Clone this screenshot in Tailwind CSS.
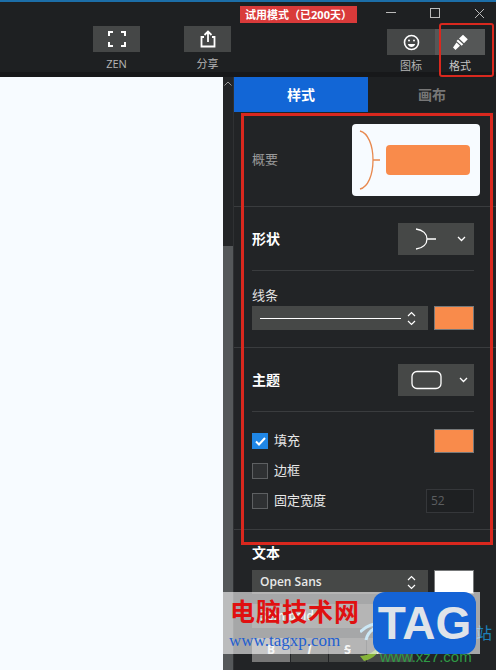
<!DOCTYPE html>
<html lang="zh">
<head>
<meta charset="UTF-8" />
<title>格式</title>
<script src="https://cdn.jsdelivr.net/npm/@tailwindcss/browser@4"></script>
</head>
<body class="w-[496px] h-[670px] overflow-hidden relative bg-[#222426] text-[#e8e8e8] text-[12px] font-['Open_Sans','Noto_Sans_CJK_SC',sans-serif]">

<!-- 顶部工具栏 -->
<header class="h-[77px] bg-[#1e2022] border-t-2 border-t-[#1c6ea8] border-b-[5px] border-b-[#17181a] relative">
  <div class="absolute left-[240px] top-[4px] w-[117px] h-[17px] bg-[#d93a3a] text-white text-[11px] font-bold leading-[17px] text-center">试用模式（已200天）</div>
  <div class="absolute right-0 top-[1px] flex items-center h-[20px]">
    <svg class="w-[58px] h-[20px]" viewBox="0 0 58 20"><path d="M18 9.500h10" stroke="#bbb" fill="none"/></svg>
    <svg class="w-[24px] h-[20px]" viewBox="0 0 24 20"><rect x="4.500" y="5.500" width="9" height="9" stroke="#bbb" fill="none"/></svg>
    <svg class="w-[46px] h-[20px]" viewBox="0 0 46 20"><path d="M25 6l9 9M34 6l-9 9" stroke="#bbb" fill="none"/></svg>
  </div>
  <div class="absolute left-[93px] top-[24px] flex gap-[44px]">
    <div class="w-[47px] flex flex-col items-center">
      <div class="w-[47px] h-[26px] bg-[#454747] flex items-center justify-center">
        <svg class="w-[18px] h-[16px]" viewBox="0 0 18 16" fill="none" stroke="#fff" stroke-width="2"><path d="M1 5V1h4M13 1h4v4M17 11v4h-4M5 15H1v-4"/></svg>
      </div>
      <span class="mt-[5px] text-[11px] leading-[14px] text-[#b4b4b4]">ZEN</span>
    </div>
    <div class="w-[47px] flex flex-col items-center">
      <div class="w-[47px] h-[26px] bg-[#454747] flex items-center justify-center">
        <svg class="w-[18px] h-[18px]" viewBox="0 0 18 18" fill="none" stroke="#fff" stroke-width="1.800"><path d="M5 7H2.500v9.500h13V7H13M9 12V1.500M5.500 5L9 1.500 12.500 5"/></svg>
      </div>
      <span class="mt-[5px] text-[11px] leading-[14px] text-[#b4b4b4]">分享</span>
    </div>
  </div>
  <div class="absolute left-[387px] top-[27px] flex">
    <div class="w-[48px] flex flex-col items-center">
      <div class="w-[48px] h-[26px] bg-[#454747] flex items-center justify-center">
        <svg class="w-[17px] h-[17px]" viewBox="0 0 17 17" fill="none" stroke="#fff" stroke-width="1.600"><circle cx="8.500" cy="8.500" r="7"/><circle cx="6" cy="6.500" r="1" fill="#fff" stroke="none"/><circle cx="11" cy="6.500" r="1" fill="#fff" stroke="none"/><path d="M4.800 10h7.400c-.6 2-2 3-3.700 3s-3.100-1-3.700-3z" fill="#fff" stroke="none"/></svg>
      </div>
      <span class="mt-[4px] text-[11px] leading-[14px] text-[#b4b4b4]">图标</span>
    </div>
    <div class="w-[50px] flex flex-col items-center">
      <div class="w-[50px] h-[26px] bg-[#555757] flex items-center justify-center">
        <svg class="w-[17px] h-[17px]" viewBox="0 0 17 17" fill="#fff"><path d="M7 4.500L11 .800l4.800 4.400-3.800 4zM6 5.500l5.200 4.700-1.500 1.500-5.200-4.700zM4.500 8.500l3.500 3.300L3.500 16 1 13.500z"/></svg>
      </div>
      <span class="mt-[4px] text-[11px] leading-[14px] text-[#c4c4c4]">格式</span>
    </div>
  </div>
</header>

<div class="flex h-[593px]">
  <!-- 画布 -->
  <div class="w-[223px] bg-[#f7fbff]"></div>
  <!-- 滚动条 -->
  <div class="w-[11px] bg-[#232527] border-r border-[#2f3133] flex flex-col">
    <div class="h-[169px] flex justify-center pt-[4px]">
      <svg class="w-[8px] h-[5px]" viewBox="0 0 8 5" fill="none" stroke="#999"><path d="M.5 4.500L4 1l3.500 3.500"/></svg>
    </div>
    <div class="flex-1 bg-[#55585a]"></div>
  </div>
  <!-- 右侧面板 -->
  <aside class="w-[262px] bg-[#222426]">
    <div class="flex h-[35px] text-[14px] font-bold leading-[35px] text-center">
      <div class="w-[134px] bg-[#1266d6] text-white">样式</div>
      <div class="flex-1 bg-[#1e2022] text-[#777]">画布</div>
    </div>

    <section class="h-[95px] border-b border-[#3a3c3e] pl-[18px] pr-[16px] flex items-center justify-between pt-[12px] pb-[10px]">
      <span class="text-[#9a9a9a] text-[13px]">概要</span>
      <div class="w-[128px] h-[72px] bg-[#f7fbff] rounded-[4px] flex items-center gap-[6px] pl-[7px]">
        <svg class="w-[21px] h-[60px]" viewBox="0 0 21 60" fill="none" stroke="#e8894f" stroke-width="1.300"><path d="M1 1c8 2 13 14 13 29S9 57 1 59M14 30h7"/></svg>
        <div class="w-[84px] h-[30px] bg-[#f98b4b] rounded-[4px]"></div>
      </div>
    </section>

    <div class="px-[18px] pr-[22px]">
      <div class="h-[64px] border-b border-[#3a3c3e] flex items-center justify-between">
        <span class="font-bold text-white text-[14px]">形状</span>
        <div class="w-[76px] h-[32px] bg-[#464847] flex items-center pl-[17px] gap-[20px]">
          <svg class="w-[22px] h-[22px]" viewBox="0 0 22 22" fill="none" stroke="#fff" stroke-width="1.300"><path d="M1 1c7 1 11 5 11 10s-4 9-11 10M12 11h9"/></svg>
          <svg class="w-[9px] h-[6px]" viewBox="0 0 9 6" fill="none" stroke="#fff" stroke-width="1.300"><path d="M1 1l3.500 3.500L8 1"/></svg>
        </div>
      </div>
      <div class="h-[76px] pt-[15px]">
        <div class="text-[13px] leading-[18px] text-[#e2e2e2]">线条</div>
        <div class="flex justify-between mt-[2px]">
          <div class="w-[176px] h-[24px] bg-[#464847] flex items-center justify-between pl-[8px] pr-[12px]">
            <div class="w-[141px] h-px bg-white"></div>
            <svg class="w-[9px] h-[15px]" viewBox="0 0 9 15" fill="none" stroke="#fff" stroke-width="1.200"><path d="M1 5l3.500-3.500L8 5M1 10l3.500 3.500L8 10"/></svg>
          </div>
          <div class="w-[40px] h-[24px] bg-[#f98b4b] border border-[#77797a]"></div>
        </div>
      </div>
    </div>

    <div class="border-t border-[#3a3c3e] px-[18px] pr-[22px]">
      <div class="h-[64px] border-b border-[#3a3c3e] flex items-center justify-between">
        <span class="font-bold text-white text-[14px]">主题</span>
        <div class="w-[76px] h-[32px] bg-[#464847] flex items-center pl-[13px] gap-[17px]">
          <svg class="w-[31px] h-[20px]" viewBox="0 0 31 20" fill="none" stroke="#fff" stroke-width="1.300"><rect x="1" y="1.500" width="29" height="17" rx="5"/></svg>
          <svg class="w-[9px] h-[6px]" viewBox="0 0 9 6" fill="none" stroke="#fff" stroke-width="1.300"><path d="M1 1l3.500 3.500L8 1"/></svg>
        </div>
      </div>
      <div class="h-[117px] pt-[17px] flex flex-col">
        <div class="h-[24px] flex items-center">
          <div class="w-[16px] h-[16px] bg-[#1f86e5] flex items-center justify-center">
            <svg class="w-[11px] h-[9px]" viewBox="0 0 11 9" fill="none" stroke="#fff" stroke-width="2"><path d="M1 4.500L4 7.500 10 1"/></svg>
          </div>
          <span class="ml-[6px] text-[13px] text-[#e8e8e8]">填充</span>
          <div class="ml-auto w-[40px] h-[24px] bg-[#f98b4b] border border-[#77797a]"></div>
        </div>
        <div class="h-[24px] mt-[6px] flex items-center">
          <div class="w-[16px] h-[16px] bg-[#2f3133] border border-[#5e6062]"></div>
          <span class="ml-[6px] text-[13px] text-[#e8e8e8]">边框</span>
        </div>
        <div class="h-[24px] mt-[6px] flex items-center">
          <div class="w-[16px] h-[16px] bg-[#2f3133] border border-[#5e6062]"></div>
          <span class="ml-[6px] text-[13px] text-[#e8e8e8]">固定宽度</span>
          <div class="ml-auto w-[48px] h-[24px] bg-[#1e2022] border border-[#35373a] text-[#5c5e60] text-[12px] leading-[22px] pl-[4px]">52</div>
        </div>
      </div>
    </div>

    <div class="border-t border-[#3a3c3e] px-[18px] pr-[22px] pt-[14px]">
      <div class="font-bold text-white text-[14px] leading-[18px]">文本</div>
      <div class="flex justify-between mt-[8px]">
        <div class="w-[176px] h-[24px] bg-[#464847] flex items-center justify-between pl-[8px] pr-[12px]">
          <span class="text-[12px] font-semibold text-[#e8e8e8]">Open Sans</span>
          <svg class="w-[9px] h-[15px]" viewBox="0 0 9 15" fill="none" stroke="#fff" stroke-width="1.200"><path d="M1 5l3.500-3.500L8 5M1 10l3.500 3.500L8 10"/></svg>
        </div>
        <div class="w-[40px] h-[24px] bg-white border border-[#77797a]"></div>
      </div>
      <div class="flex justify-between mt-[10px]">
        <div class="w-[166px] h-[24px] bg-[#464847] flex items-center justify-between pl-[8px] pr-[11px]">
          <span class="text-[12px] font-semibold text-[#e8e8e8]">Semibold</span>
          <svg class="w-[9px] h-[15px]" viewBox="0 0 9 15" fill="none" stroke="#fff" stroke-width="1.200"><path d="M1 5l3.500-3.500L8 5M1 10l3.500 3.500L8 10"/></svg>
        </div>
        <div class="w-[52px] h-[24px] bg-[#464847] flex items-center justify-between pl-[6px] pr-[5px]">
          <span class="text-[12px] text-[#e8e8e8]">14</span>
          <svg class="w-[9px] h-[6px]" viewBox="0 0 9 6" fill="none" stroke="#fff" stroke-width="1.300"><path d="M1 1l3.500 3.500L8 1"/></svg>
        </div>
      </div>
      <div class="flex mt-[10px] h-[24px] w-[161px] bg-[#464847] text-[12px] text-center leading-[24px] font-bold">
        <div class="w-[38px] bg-[#777]">B</div>
        <div class="w-[38px] italic border-l border-[#222426]">I</div>
        <div class="w-[38px] line-through border-l border-[#222426]">S</div>
        <div class="flex-1 border-l border-[#222426] flex items-center justify-center gap-[10px]">
          <span>Tт</span>
          <svg class="w-[9px] h-[6px]" viewBox="0 0 9 6" fill="none" stroke="#fff" stroke-width="1.300"><path d="M1 1l3.500 3.500L8 1"/></svg>
        </div>
      </div>
    </div>
  </aside>
</div>

<!-- 红色标注框 -->
<div class="absolute left-[439px] top-[23px] w-[55px] h-[54px] border-[2px] border-[#d9281e] rounded-[3px]"></div>
<div class="absolute left-[241px] top-[113px] w-[252px] h-[432px] border-[3px] border-[#d9281e]"></div>

<!-- 水印 -->
<svg class="absolute left-[360px] top-[618px] w-[40px] h-[44px]" viewBox="0 0 40 44" fill="none"><path d="M0 14C8 6 18 4 30 6 16 8 8 12 6 22" stroke="#7ec5e8" stroke-width="3"/><path d="M0 38c8 0 16-5 22-14-2 10-8 17-18 19z" fill="#86b43a"/></svg>
<div class="absolute left-[380px] top-[648px] text-[15px] leading-[18px] text-[#2f9a45] font-['Liberation_Sans',sans-serif]">www.xz7.com</div>
<div class="absolute left-[476px] top-[624px] text-[16px] leading-[18px] text-[#1c7fb8]">站</div>
<div class="absolute left-[223px] top-[592px] w-[257px] h-[62px] bg-white/60"></div>
<div class="absolute left-[230px] top-[594px] text-[25px] leading-[32px] font-bold text-[#e01010] tracking-[1px] font-['Noto_Sans_CJK_SC',sans-serif]">电脑技术网</div>
<div class="absolute left-[229px] top-[630px] text-[17px] leading-[22px] text-[#1f5fd0] font-['Liberation_Serif',serif]">www.tagxp.com</div>
<div class="absolute left-[373px] top-[592px] w-[103px] h-[62px] rounded-[12px] bg-[#1463d6] text-[#dfe3e9] text-[46px] leading-[62px] text-center font-bold font-['Liberation_Sans',sans-serif]">TAG</div>
</body>
</html>
